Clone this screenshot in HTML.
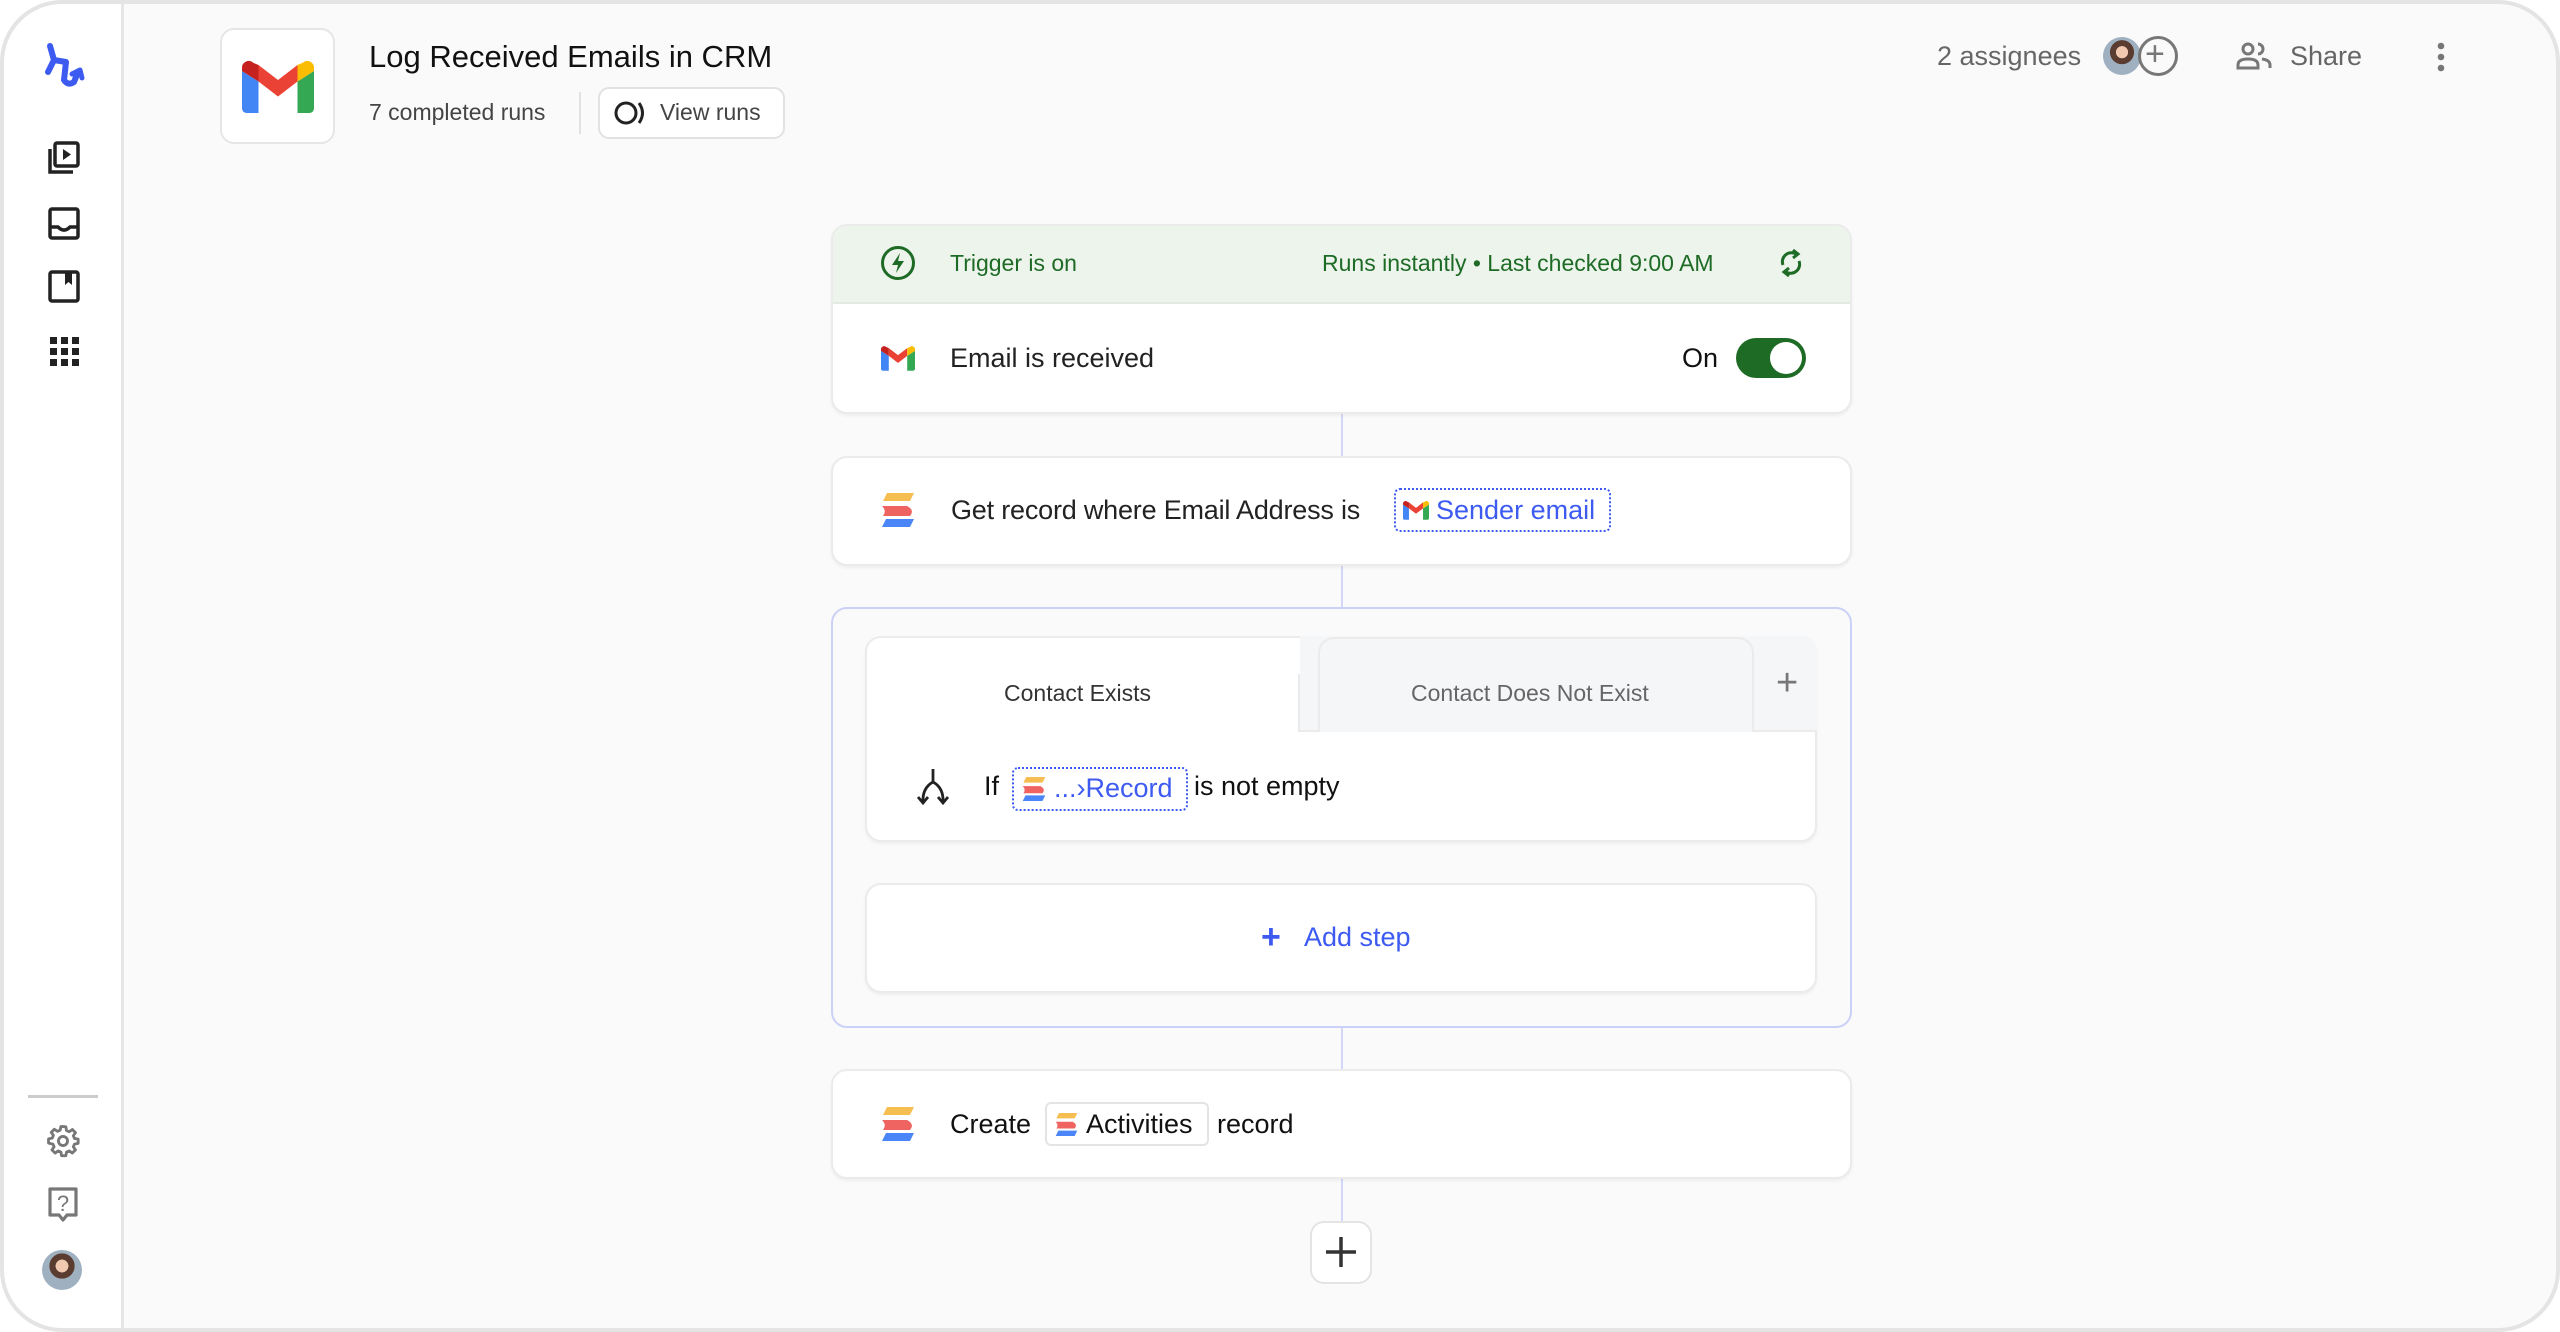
<!DOCTYPE html>
<html><head><meta charset="utf-8"><style>
*{box-sizing:border-box;margin:0;padding:0}
body{width:2560px;height:1332px;background:#fff;font-family:"Liberation Sans",sans-serif;position:relative;overflow:hidden;color:#1a1a1a}
.frame{position:absolute;left:0;top:0;width:2560px;height:1332px;border-radius:62px;overflow:hidden;background:#fafafa}
.border{position:absolute;left:0;top:0;width:2560px;height:1332px;border:4px solid #e4e4e4;border-radius:62px;pointer-events:none}
.side{position:absolute;left:0;top:0;width:124px;height:100%;background:#fff;border-right:3px solid #e6e6e6}
.a{position:absolute}
.card{position:absolute;left:831px;width:1021px;background:#fff;border:2px solid #ebebeb;border-radius:16px;box-shadow:0 2px 3px rgba(0,0,0,.05)}
.vl{position:absolute;left:1341px;width:2px;background:#d3d8f8}
.t{position:absolute;white-space:nowrap;line-height:1}
.chip{position:absolute;border:2px dotted #3d5af1;border-radius:6px}
</style></head><body>
<div class="frame">
<div class="side">
 <svg class="a" style="left:40px;top:42px" width="46" height="48" viewBox="0 0 46 48"><path d="M10 4 L14 18 L8 30 M14 18 L26 20 L24 38 Q28 44 34 40 L38 30" fill="none" stroke="#3d5af1" stroke-width="6" stroke-linecap="round" stroke-linejoin="round"/><path d="M32 32 L40 28 L42 36" fill="none" stroke="#3d5af1" stroke-width="5" stroke-linecap="round" stroke-linejoin="round"/></svg>
 <svg class="a" style="left:47px;top:141px" width="34" height="34" viewBox="0 0 34 34"><rect x="8" y="2" width="23" height="23" rx="2" fill="none" stroke="#222" stroke-width="3.5"/><path d="M3 8 V31 H26" fill="none" stroke="#222" stroke-width="3.5"/><path d="M16 8 L24 13.5 L16 19Z" fill="#222"/></svg>
 <svg class="a" style="left:48px;top:207px" width="32" height="34" viewBox="0 0 32 34"><rect x="2" y="2" width="28" height="29" rx="2" fill="none" stroke="#222" stroke-width="3.5"/><path d="M2 20 H10 Q16 26 22 20 H30" fill="none" stroke="#222" stroke-width="3.5"/></svg>
 <svg class="a" style="left:48px;top:270px" width="32" height="34" viewBox="0 0 32 34"><rect x="2" y="2" width="28" height="29" rx="2" fill="none" stroke="#222" stroke-width="3.5"/><path d="M17 2 V15 L20.5 12 L24 15 V2Z" fill="#222"/></svg>
 <svg class="a" style="left:50px;top:337px" width="30" height="30" viewBox="0 0 30 30" fill="#222"><rect x="0" y="0" width="7" height="7"/><rect x="11" y="0" width="7" height="7"/><rect x="22" y="0" width="7" height="7"/><rect x="0" y="11" width="7" height="7"/><rect x="11" y="11" width="7" height="7"/><rect x="22" y="11" width="7" height="7"/><rect x="0" y="22" width="7" height="7"/><rect x="11" y="22" width="7" height="7"/><rect x="22" y="22" width="7" height="7"/></svg>
 <div class="a" style="left:28px;top:1095px;width:70px;height:3px;background:#ccc"></div>
 <svg class="a" style="left:46px;top:1124px" width="34" height="34" viewBox="0 0 24 24"><path d="M12 1.8l2 .2.5 2.6 1.9.8 2.2-1.5 2.2 2.2-1.5 2.2.8 1.9 2.6.5v3l-2.6.5-.8 1.9 1.5 2.2-2.2 2.2-2.2-1.5-1.9.8-.5 2.6h-3l-.5-2.6-1.9-.8-2.2 1.5-2.2-2.2 1.5-2.2-.8-1.9L1.8 13.5v-3l2.6-.5.8-1.9-1.5-2.2 2.2-2.2 2.2 1.5 1.9-.8.5-2.6z" fill="none" stroke="#777" stroke-width="2" stroke-linejoin="round"/><circle cx="12" cy="12" r="3.2" fill="none" stroke="#777" stroke-width="2"/></svg>
 <svg class="a" style="left:47px;top:1186px" width="32" height="38" viewBox="0 0 32 38"><path d="M3 3 H29 V29 H20 L16 34 L12 29 H3Z" fill="none" stroke="#777" stroke-width="3.2" stroke-linejoin="round"/><text x="16" y="25" font-size="22" text-anchor="middle" fill="#777" font-family="Liberation Sans">?</text></svg>
 <div class="a" style="left:42px;top:1250px;width:40px;height:40px;border-radius:50%;background:radial-gradient(circle at 50% 40%,#f0c9b0 0 20%,#5a3d30 21% 40%,#9fb0c0 41%)"></div>
</div>

<div class="a" style="left:220px;top:28px;width:115px;height:116px;background:#fff;border:2px solid #e6e6e6;border-radius:14px"></div>
<svg class="a" style="left:242px;top:59px" width="72" height="54" viewBox="0 0 48 36"><path d="M0 8V33a3 3 0 0 0 3 3H11V15Z" fill="#4285f4"/><path d="M37 15V36H45a3 3 0 0 0 3-3V8Z" fill="#34a853"/><path d="M11 15L24 25L37 15V4L24 14L11 4Z" fill="#ea4335"/><path d="M0 8V6a4.5 4.5 0 0 1 7.5-3.5L11 4V15Z" fill="#c5221f"/><path d="M37 4L40.5 2.5A4.5 4.5 0 0 1 48 6V8L37 15Z" fill="#fbbc04"/></svg>
<div class="t" style="left:369px;top:41px;font-size:31px;color:#111">Log Received Emails in CRM</div>
<div class="t" style="left:369px;top:101px;font-size:23px;color:#444">7 completed runs</div>
<div class="a" style="left:579px;top:92px;width:2px;height:42px;background:#e2e2e2"></div>
<div class="a" style="left:598px;top:87px;width:187px;height:52px;border:2px solid #e2e2e2;border-radius:11px;background:#fff"></div>
<svg class="a" style="left:614px;top:100px" width="34" height="26" viewBox="0 0 34 26"><circle cx="12" cy="13" r="10" fill="none" stroke="#222" stroke-width="3"/><path d="M25 3 Q32 13 25 23" fill="none" stroke="#222" stroke-width="3"/></svg>
<div class="t" style="left:660px;top:101px;font-size:23px;color:#444">View runs</div>

<div class="t" style="left:1937px;top:43px;font-size:27px;color:#666">2 assignees</div>
<div class="a" style="left:2103px;top:37px;width:38px;height:38px;border-radius:50%;background:radial-gradient(circle at 50% 40%,#f0c9b0 0 20%,#5a3d30 21% 40%,#9fb0c0 41%)"></div>
<div class="a" style="left:2138px;top:36px;width:40px;height:40px;border-radius:50%;border:3px solid #777;background:#fafafa"></div>
<div class="t" style="left:2145px;top:37px;font-size:34px;color:#777">+</div>
<svg class="a" style="left:2236px;top:42px" width="36" height="28" viewBox="0 0 36 28"><circle cx="12" cy="7" r="5" fill="none" stroke="#777" stroke-width="3"/><path d="M2 26v-3q0-6 10-6t10 6v3Z" fill="none" stroke="#777" stroke-width="3"/><path d="M22 2a5 5 0 0 1 0 10" fill="none" stroke="#777" stroke-width="3"/><path d="M26 17q8 1 8 6v3" fill="none" stroke="#777" stroke-width="3"/></svg>
<div class="t" style="left:2290px;top:43px;font-size:27px;color:#666">Share</div>
<svg class="a" style="left:2436px;top:42px" width="10" height="30" viewBox="0 0 10 30" fill="#777"><circle cx="5" cy="4" r="3.3"/><circle cx="5" cy="15" r="3.3"/><circle cx="5" cy="26" r="3.3"/></svg>

<div class="vl" style="top:412px;height:46px"></div>
<div class="vl" style="top:564px;height:44px"></div>
<div class="vl" style="top:840px;height:44px"></div>
<div class="vl" style="top:1026px;height:44px"></div>
<div class="vl" style="top:1178px;height:44px"></div>

<div class="card" style="top:224px;height:190px;overflow:hidden">
 <div class="a" style="left:0;top:0;width:100%;height:78px;background:#ecf4ec;border-bottom:2px solid #e4e9e4"></div>
</div>
<svg class="a" style="left:880px;top:245px" width="36" height="36" viewBox="0 0 36 36"><circle cx="18" cy="18" r="15.5" fill="none" stroke="#1e6b26" stroke-width="3"/><path d="M20 8 L12 20 H18 L16 28 L24 16 H18Z" fill="#1e6b26"/></svg>
<div class="t" style="left:950px;top:252px;font-size:23px;color:#1e6b26">Trigger is on</div>
<div class="t" style="left:1322px;top:252px;font-size:23px;color:#1e6b26">Runs instantly • Last checked 9:00 AM</div>
<svg class="a" style="left:1778px;top:247px" width="26" height="32" viewBox="0 0 26 32"><path d="M5 18 A9 9 0 0 1 18 7" fill="none" stroke="#1e6b26" stroke-width="3"/><path d="M15 3 L20 7 L15 11" fill="none" stroke="#1e6b26" stroke-width="3"/><path d="M21 14 A9 9 0 0 1 8 25" fill="none" stroke="#1e6b26" stroke-width="3"/><path d="M11 21 L6 25 L11 29" fill="none" stroke="#1e6b26" stroke-width="3"/></svg>
<svg class="a" style="left:881px;top:345px" width="34" height="26" viewBox="0 0 48 36"><path d="M0 8V33a3 3 0 0 0 3 3H11V15Z" fill="#4285f4"/><path d="M37 15V36H45a3 3 0 0 0 3-3V8Z" fill="#34a853"/><path d="M11 15L24 25L37 15V4L24 14L11 4Z" fill="#ea4335"/><path d="M0 8V6a4.5 4.5 0 0 1 7.5-3.5L11 4V15Z" fill="#c5221f"/><path d="M37 4L40.5 2.5A4.5 4.5 0 0 1 48 6V8L37 15Z" fill="#fbbc04"/></svg>
<div class="t" style="left:950px;top:345px;font-size:27px;color:#222">Email is received</div>
<div class="t" style="left:1682px;top:345px;font-size:27px;color:#111">On</div>
<div class="a" style="left:1736px;top:338px;width:70px;height:40px;border-radius:20px;background:#1e6b26"></div>
<div class="a" style="left:1770px;top:342px;width:32px;height:32px;border-radius:50%;background:#fff"></div>

<div class="card" style="top:456px;height:110px"></div>
<svg class="a" style="left:881px;top:492px" width="34" height="36" viewBox="0 0 34 36"><path d="M6 1H33L29 9H2Z" fill="#f6be50"/><path d="M1 14H26Q34 18 29 24H2Q6 19 1 14Z" fill="#ef6461"/><path d="M5 27H33L29 35H1Z" fill="#4a86f7"/></svg>
<div class="t" style="left:951px;top:497px;font-size:27px;color:#222;letter-spacing:-0.2px">Get record where Email Address is</div>
<div class="chip" style="left:1394px;top:488px;width:217px;height:44px;background:#fff"></div>
<svg class="a" style="left:1403px;top:500px" width="26" height="20" viewBox="0 0 48 36"><path d="M0 8V33a3 3 0 0 0 3 3H11V15Z" fill="#4285f4"/><path d="M37 15V36H45a3 3 0 0 0 3-3V8Z" fill="#34a853"/><path d="M11 15L24 25L37 15V4L24 14L11 4Z" fill="#ea4335"/><path d="M0 8V6a4.5 4.5 0 0 1 7.5-3.5L11 4V15Z" fill="#c5221f"/><path d="M37 4L40.5 2.5A4.5 4.5 0 0 1 48 6V8L37 15Z" fill="#fbbc04"/></svg>
<div class="t" style="left:1436px;top:497px;font-size:27px;color:#3d5af1">Sender email</div>

<div class="a" style="left:831px;top:607px;width:1021px;height:421px;border:2px solid #ccd2f7;border-radius:16px;background:#fafafa"></div>
<div class="a" style="left:865px;top:636px;width:952px;height:206px;border:2px solid #ebebeb;border-radius:16px;background:#fff;box-shadow:0 2px 3px rgba(0,0,0,.05)"></div>
<div class="a" style="left:1300px;top:636px;width:517px;height:94px;background:#f5f6f8;border-radius:0 16px 0 0"></div>
<div class="a" style="left:1298px;top:730px;width:519px;height:2px;background:#ebebeb"></div>
<div class="a" style="left:1318px;top:637px;width:436px;height:95px;border:2px solid #ebebeb;border-bottom:none;border-radius:16px 16px 0 0;background:#f5f6f8"></div>
<div class="a" style="left:1298px;top:674px;width:2px;height:58px;background:#ebebeb"></div>
<div class="t" style="left:1004px;top:682px;font-size:23px;color:#333">Contact Exists</div>
<div class="t" style="left:1411px;top:682px;font-size:23px;color:#666">Contact Does Not Exist</div>
<div class="t" style="left:1776px;top:664px;font-size:38px;color:#777">+</div>
<svg class="a" style="left:916px;top:768px" width="34" height="38" viewBox="0 0 34 38"><path d="M17 1V14 M17 14 Q6 20 7 35 M17 14 Q28 20 27 35" fill="none" stroke="#222" stroke-width="2.8"/><path d="M2 29 L7 35 L12 29 M22 29 L27 35 L32 29" fill="none" stroke="#222" stroke-width="2.8"/></svg>
<div class="t" style="left:984px;top:773px;font-size:27px;color:#111">If</div>
<div class="chip" style="left:1012px;top:767px;width:176px;height:44px;background:#fff"></div>
<svg class="a" style="left:1022px;top:776px" width="24" height="26" viewBox="0 0 34 36"><path d="M6 1H33L29 9H2Z" fill="#f6be50"/><path d="M1 14H26Q34 18 29 24H2Q6 19 1 14Z" fill="#ef6461"/><path d="M5 27H33L29 35H1Z" fill="#4a86f7"/></svg>
<div class="t" style="left:1054px;top:775px;font-size:27px;color:#3d5af1">...›Record</div>
<div class="t" style="left:1194px;top:773px;font-size:27px;color:#111">is not empty</div>

<div class="card" style="left:865px;width:952px;top:883px;height:110px"></div>
<div class="t" style="left:1261px;top:920px;font-size:34px;color:#3d5af1;font-weight:bold">+</div>
<div class="t" style="left:1304px;top:924px;font-size:27px;color:#3d5af1">Add step</div>

<div class="card" style="top:1069px;height:110px"></div>
<svg class="a" style="left:881px;top:1106px" width="34" height="36" viewBox="0 0 34 36"><path d="M6 1H33L29 9H2Z" fill="#f6be50"/><path d="M1 14H26Q34 18 29 24H2Q6 19 1 14Z" fill="#ef6461"/><path d="M5 27H33L29 35H1Z" fill="#4a86f7"/></svg>
<div class="t" style="left:950px;top:1111px;font-size:27px;color:#111">Create</div>
<div class="a" style="left:1045px;top:1102px;width:164px;height:44px;border:2px solid #e4e4e4;border-radius:6px;background:#fff"></div>
<svg class="a" style="left:1055px;top:1112px" width="23" height="25" viewBox="0 0 34 36"><path d="M6 1H33L29 9H2Z" fill="#f6be50"/><path d="M1 14H26Q34 18 29 24H2Q6 19 1 14Z" fill="#ef6461"/><path d="M5 27H33L29 35H1Z" fill="#4a86f7"/></svg>
<div class="t" style="left:1086px;top:1111px;font-size:27px;color:#111">Activities</div>
<div class="t" style="left:1217px;top:1111px;font-size:27px;color:#111">record</div>

<div class="a" style="left:1310px;top:1221px;width:62px;height:63px;border:2px solid #e4e4e4;border-radius:14px;background:#fff"></div>
<svg class="a" style="left:1325px;top:1236px" width="32" height="32" viewBox="0 0 32 32"><path d="M16 1V31M1 16H31" stroke="#333" stroke-width="3.5"/></svg>
</div>
<div class="border"></div>
</body></html>
